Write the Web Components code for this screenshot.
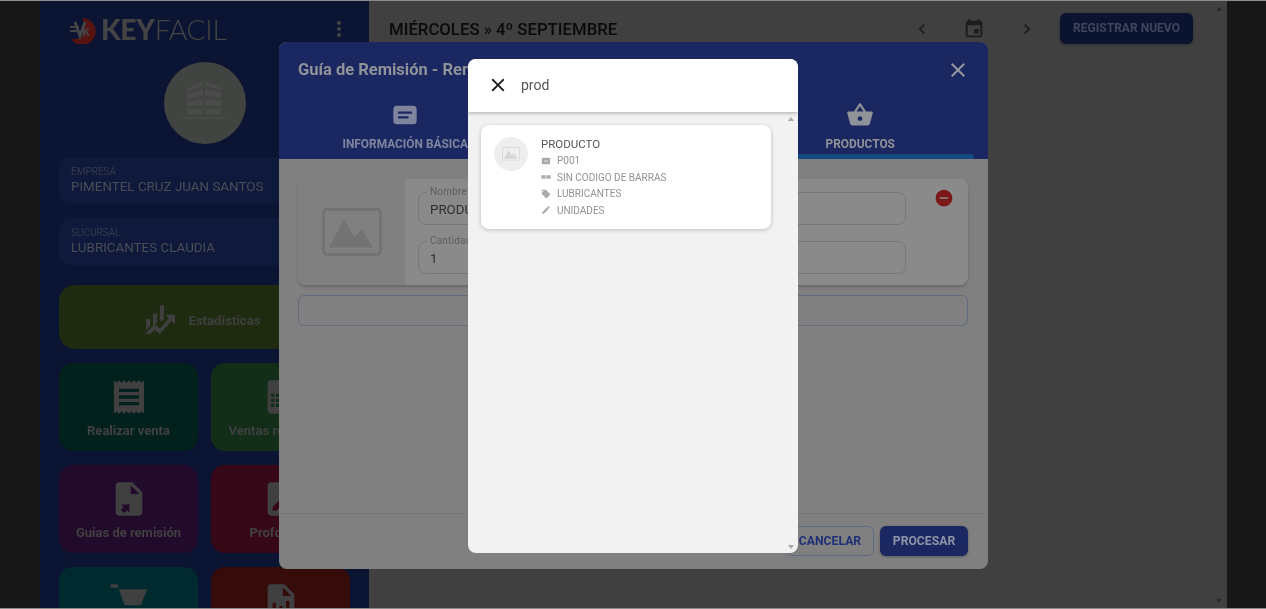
<!DOCTYPE html>
<html lang="es"><head><meta charset="utf-8"><title>KeyFacil</title>
<style>
html,body{margin:0;padding:0;height:100%;overflow:hidden;background:#8c8c8c}
body{font-family:Roboto,"Liberation Sans",sans-serif}
</style></head>
<body>
<kf-app></kf-app>
<script>
const P={
 close:'M19 6.41L17.59 5 12 10.59 6.41 5 5 6.41 10.59 12 5 17.59 6.41 19 12 13.41 17.59 19 19 17.59 13.41 12z',
 left:'M15.41 7.41L14 6l-6 6 6 6 1.41-1.41L10.83 12z',
 right:'M10 6L8.59 7.41 13.17 12l-4.58 4.59L10 18l6-6z',
 event:'M17 12h-5v5h5v-5zM16 1v2H8V1H6v2H5c-1.11 0-1.99.9-1.99 2L3 19c0 1.1.89 2 2 2h14c1.1 0 2-.9 2-2V5c0-1.1-.9-2-2-2h-1V1h-2zm3 18H5V8h14v11z',
 more:'M12 8c1.1 0 2-.9 2-2s-.9-2-2-2-2 .9-2 2 .9 2 2 2zm0 2c-1.1 0-2 .9-2 2s.9 2 2 2 2-.9 2-2-.9-2-2-2zm0 6c-1.1 0-2 .9-2 2s.9 2 2 2 2-.9 2-2-.9-2-2-2z',
 receipt:'M18 17H6v-2h12v2zm0-4H6v-2h12v2zm0-4H6V7h12v2zM3 22l1.5-1.5L6 22l1.5-1.5L9 22l1.5-1.5L12 22l1.5-1.5L15 22l1.5-1.5L18 22l1.5-1.5L21 22V2l-1.5 1.5L18 2l-1.5 1.5L15 2l-1.5 1.5L12 2l-1.5 1.5L9 2 7.5 3.5 6 2 4.5 3.5 3 2v20z',
 list:'M14 2H6c-1.1 0-2 .9-2 2v16c0 1.1.9 2 2 2h12c1.1 0 2-.9 2-2V8l-6-6zM6 10h2v2H6zM6 13h2v2H6zM6 16h2v2H6zM9 10h9v2H9zM9 13h9v2H9zM9 16h9v2H9z',
 fileout:'M14 2H6c-1.1 0-2 .9-2 2v16c0 1.1.9 2 2 2h12c1.1 0 2-.9 2-2V8l-6-6zM13 9V3.7L18.3 9H13zM8.2 19.6l-1.1-1.1 1.7-1.7-1.4-1.4 4.9-.2-.2 4.9-1.4-1.4-1.7 1.7-.7-.8z',
 filepen:'M14 2H6c-1.1 0-2 .9-2 2v16c0 1.1.9 2 2 2h12c1.1 0 2-.9 2-2V8l-6-6zM13 9V3.7L18.3 9H13zM7 19v-2.2l5-5 2.2 2.2-5 5H7z',
 filechart:'M14 2H6c-1.1 0-2 .9-2 2v16c0 1.1.9 2 2 2h12c1.1 0 2-.9 2-2V8l-6-6zM13 9V3.7L18.3 9H13zM9 19H7v-6h2v6zm4 0h-2v-4h2v4zm4 0h-2v-7h2v7z',
 cart:'M1 2h4.200l1 3H23l-4 9.500H9.200L5.700 4H1V2zM8 16.500h13v2H8zM8.500 20.500a2 2 0 1 0 .01 0zM18.500 20.500a2 2 0 1 0 .01 0z',
 subject:'M5 4h14a3 3 0 0 1 3 3v10a3 3 0 0 1-3 3H5a3 3 0 0 1-3-3V7a3 3 0 0 1 3-3zM6 9v2h12V9H6zm0 4v2h9v-2H6z',
 basket:'M17.21 9l-4.38-6.56c-.19-.28-.51-.42-.83-.42-.32 0-.64.14-.83.43L6.79 9H2c-.55 0-1 .45-1 1 0 .09.01.18.04.27l2.54 9.27c.23.84 1 1.46 1.92 1.46h13c.92 0 1.69-.62 1.93-1.46l2.54-9.27L23 10c0-.55-.45-1-1-1h-4.79zM9 9l3-4.4L15 9H9zm3 8c-1.1 0-2-.9-2-2s.9-2 2-2 2 .9 2 2-.9 2-2 2z',
 minus:'M12 2C6.48 2 2 6.48 2 12s4.48 10 10 10 10-4.48 10-10S17.52 2 12 2zm5 11H7v-2h10v2z',
 code:'M4 4h16a2 2 0 0 1 2 2v12a2 2 0 0 1-2 2H4a2 2 0 0 1-2-2V6a2 2 0 0 1 2-2zM10 9.500l-2.500 2.500 2.500 2.500 1-1-1.500-1.500 1.500-1.500-1-1zm4 0l-1 1 1.500 1.500-1.500 1.500 1 1 2.500-2.500-2.500-2.500z',
 barcode:'M1 8h10v8H1zM13 8h10v8H13z',
 tag:'M21.41 11.58l-9-9C12.05 2.22 11.55 2 11 2H4c-1.1 0-2 .9-2 2v7c0 .55.22 1.05.59 1.42l9 9c.36.36.86.58 1.41.58.55 0 1.05-.22 1.41-.59l7-7c.37-.36.59-.86.59-1.41 0-.55-.23-1.06-.59-1.42zM5.500 7C4.670 7 4 6.330 4 5.500S4.670 4 5.500 4 7 4.670 7 5.500 6.330 7 5.500 7z',
 pencil:'M3 17.25V21h3.75L17.81 9.94l-3.75-3.75L3 17.25zM20.71 7.04c.39-.39.39-1.02 0-1.41l-2.34-2.34c-.39-.39-1.02-.39-1.41 0l-1.83 1.83 3.75 3.75 1.83-1.83z',
 chart:'M3 13h3v5l-3 3v-8zM8 9h3v7l-3 2V9zM13 3h3v10l-3 2V3zM2 24l7-7 4 3 6.500-7.500L17 10h7v7l-2.500-2.500L13 24l-4-3-4 4-3-1z',
 building:'M11 2L3 6v1.200L11 4zM12 2l8 3.500v1.200L12 4zM3 8.500L11 6v3.500L3 11zM12 6l8 2v2.500L12 9.500zM3 12.200L11 11v3.500H3zM12 11l8 .800v2.700H12zM3 16h8v2.500H3zM12 16h8v2.500h-8zM1 20h22v.8H1z'
};
function def(name,html,init){
 customElements.define(name,class extends HTMLElement{
  connectedCallback(){
   if(this.shadowRoot)return;
   const r=this.attachShadow({mode:'open'});
   r.innerHTML=typeof html==='function'?html(this):html;
   if(init)init(this,r);
  }
 });
}
def('kf-icon',h=>{const s=h.getAttribute('size')||24;return `<style>:host{display:inline-flex;width:${s}px;height:${s}px;flex:none;color:inherit}svg{display:block;width:100%;height:100%;fill:currentColor}</style><svg viewBox="0 0 24 24" aria-hidden="true"><path fill-rule="evenodd" d="${P[h.getAttribute('name')]}"/></svg>`});

def('kf-picture',h=>{const w=h.getAttribute('width')||60;return `<style>:host{display:inline-flex;flex:none;width:${w}px;height:${w*.8}px;color:inherit}svg{width:100%;height:100%}</style><svg viewBox="0 0 60 48" aria-hidden="true"><rect x="1.500" y="1.500" width="57" height="45" rx="3.500" fill="none" stroke="currentColor" stroke-width="3"/><path d="M8 39L22 12 32 30 40 22 50 39z" fill="currentColor" stroke="currentColor" stroke-width="1" stroke-linejoin="round"/></svg>`});

def('kf-logo',`<style>:host{display:flex;align-items:center;height:30px;color:#444;font-family:Lato,sans-serif;font-size:28.300px;line-height:30px;letter-spacing:-.3px}
svg{width:30px;height:30px;flex:none;margin-right:2px}b{font-weight:900}span{font-weight:300}text{font-family:"Liberation Sans",sans-serif;font-weight:700;font-size:14px;fill:#444}</style>
<svg viewBox="0 0 30 30"><path d="M13 4a13.500 13.500 0 1 1-11 21c6 1 12-2 13-8C16 11 15 7 13 4z" fill="#561310"/><path d="M6 8l5 14 5-14" fill="none" stroke="#444" stroke-width="3"/><path d="M1 13h9M1 17h9" stroke="#444" stroke-width="2"/><text x="13" y="22">k</text></svg><b>KEY</b><span>FACIL</span>`);

def('kf-info',`<style>:host{display:flex;flex-direction:column;justify-content:center;height:47px;padding-left:12px;border-radius:12px;background:#0f193b;box-sizing:border-box}
.l{font-size:10px;line-height:12px;color:#343a4c}.v{font-size:13.400px;line-height:18px;color:#4a4d55;white-space:nowrap}</style>
<div class="l"><slot name="label"></slot></div><div class="v"><slot></slot></div>`);

def('kf-tile',h=>`<style>:host{display:flex;flex-direction:column;align-items:center;justify-content:flex-start;height:88px;border-radius:14px;background:${h.getAttribute('bg')};color:#404040;font-weight:700;font-size:13px;line-height:16px;box-sizing:border-box;padding-top:14px;overflow:hidden;white-space:nowrap}
.i{height:40px;margin-bottom:6px}</style><div class="i"><kf-icon name="${h.getAttribute('icon')}" size="40"></kf-icon></div><slot></slot>`);

def('kf-sidebar',`<style>:host{display:block;width:329px;flex:none;background:#0b1433;padding:0 19px;box-sizing:border-box;overflow:hidden;height:100%}
.top{display:flex;align-items:center;justify-content:space-between;height:30px;margin-top:13px;padding:0 0 0 10px;margin-right:-1px;color:#444}
.av{width:82px;height:82px;border-radius:50%;background:#424442;margin:18px auto 13px;display:flex;align-items:center;justify-content:center;color:#4a4c4a;box-sizing:border-box;padding-bottom:5px}
kf-info{margin-bottom:14px}kf-info+kf-info{margin-bottom:20px}
.stat{display:flex;align-items:center;justify-content:center;gap:13px;height:64px;border-radius:16px;background:#1f2b10;color:#3f3f3f;font-weight:700;font-size:13.200px;margin-bottom:14px;box-sizing:border-box;padding:0 6px 0 0}
.stat span{position:relative;top:3px}
.grid{display:grid;grid-template-columns:139px 139px;gap:14px 13px}</style>
<div class="top"><kf-logo></kf-logo><kf-icon name="more" size="24"></kf-icon></div>
<div class="av"><kf-icon name="building" size="48"></kf-icon></div>
<kf-info><span slot="label">EMPRESA</span>PIMENTEL CRUZ JUAN SANTOS</kf-info>
<kf-info><span slot="label">SUCURSAL</span>LUBRICANTES CLAUDIA</kf-info>
<div class="stat"><kf-icon name="chart" size="33"></kf-icon><span>Estadísticas</span></div>
<div class="grid">
<kf-tile bg="#02211d" icon="receipt">Realizar venta</kf-tile>
<kf-tile bg="#122e18" icon="list">Ventas realizadas</kf-tile>
<kf-tile bg="#220a2a" icon="fileout">Guias de remisión</kf-tile>
<kf-tile bg="#360716" icon="filepen">Proformas</kf-tile>
<kf-tile bg="#012a2f" icon="cart"></kf-tile>
<kf-tile bg="#360c0a" icon="filechart"></kf-tile>
</div>`);

def('kf-topbar',`<style>:host{display:flex;align-items:center;height:56px;padding:0 34px 0 20px;box-sizing:border-box;color:#0a0a0a}
h1{flex:1;margin:0;font-weight:500;font-size:16.750px;line-height:56px;white-space:nowrap}
.n{width:52.500px;display:flex;justify-content:center;color:#1c1c1c}
button{all:unset;box-sizing:border-box;margin:-2px 0 0 7px;width:133px;height:31px;border-radius:6px;background:#0a1330;color:#3e465e;font:700 12.050px/31px Roboto,sans-serif;text-align:center;box-shadow:0 1px 3px rgba(0,0,0,.3);white-space:nowrap}</style>
<h1>MIÉRCOLES » 4º SEPTIEMBRE</h1>
<span class="n"><kf-icon name="left" size="20"></kf-icon></span><span class="n"><kf-icon name="event" size="22"></kf-icon></span><span class="n"><kf-icon name="right" size="20"></kf-icon></span>
<button>REGISTRAR NUEVO</button>`);

def('kf-arrow',h=>`<style>:host{position:absolute;width:0;height:0;border-left:3.500px solid transparent;border-right:3.500px solid transparent;${h.getAttribute('dir')==='up'?'border-bottom':'border-top'}:4px solid ${h.getAttribute('color')||'#2a2a2a'};left:${h.getAttribute('x')}px;${h.hasAttribute('top')?'top:'+h.getAttribute('top')+'px':'bottom:'+h.getAttribute('bottom')+'px'}}</style>`);

def('kf-field',`<style>:host{display:block;position:relative;height:33px;border:1px solid #787878;border-radius:8px;box-sizing:border-box;color:#2e2e2e;font-size:13.300px;line-height:31px;padding:1px 11px 0}
.l{position:absolute;top:-7px;left:8px;padding:0 3px;background:#8a8a8a;color:#5e5e5e;font-size:10px;line-height:12px;letter-spacing:.2px}</style><span class="l"><slot name="label"></slot></span><slot></slot>`);

def('kf-tab',h=>`<style>:host{display:flex;flex-direction:column;align-items:center;flex:1;color:${h.hasAttribute('active')?'#909299':'#7f859f'};font-weight:700;font-size:11.900px;line-height:14px;white-space:nowrap;position:relative}
kf-icon{margin:0 0 8px}</style><kf-icon name="${h.getAttribute('icon')||'subject'}" size="28"></kf-icon><slot></slot>`);

def('kf-modal',`<style>:host{position:absolute;left:279px;top:41px;width:709px;height:527px;border-radius:8px;overflow:hidden;background:#808080;display:flex;flex-direction:column}
header{height:117px;background:#1a2760;position:relative;box-sizing:border-box;flex:none}
.title{display:flex;align-items:center;justify-content:space-between;padding:16px 19px 0;color:#909299;font-size:16.500px;font-weight:700;line-height:22px}
.title kf-icon{color:#96989e;margin-right:-1px}
.tabs{display:flex;position:absolute;left:12.500px;width:682.500px;top:59px}
.bar{position:absolute;left:467px;width:228px;bottom:0;height:5px;background:#134a80;border-radius:3px 3px 0 0}
main{flex:1;padding:20px 20px 0 19px;background:#808080}
.card{display:flex;height:106px;border-radius:8px;background:#8a8a8a;box-shadow:0 2px 3px rgba(0,0,0,.2);overflow:hidden}
.pic{width:107px;background:#808080;display:flex;align-items:center;justify-content:center;color:#737373;padding-left:1px;box-sizing:border-box}
.fields{flex:1;display:flex;flex-direction:column;gap:16px;padding:13px 0 0 13px}
.rem{width:62px;display:flex;justify-content:center;padding:9px 0 0 14px;box-sizing:border-box;color:#7c1818}
.obs{height:31px;margin-top:10px;border:1px solid #606c7c;border-radius:6px;box-sizing:border-box}
footer{height:56px;border-top:1px solid #767676;display:flex;justify-content:flex-end;align-items:center;gap:6px;padding:0 20px 2px;flex:none;box-sizing:border-box}
button{all:unset;box-sizing:border-box;width:88px;height:30px;border-radius:6px;text-align:center;font:700 12.200px/28px Roboto,sans-serif}
.c{border:1px solid #5e6888;color:#1f2f78}.p{background:#1a2760;color:#8f94a9;line-height:30px;box-shadow:0 1px 3px rgba(0,0,0,.3)}</style>
<header><div class="title"><span>Guía de Remisión - Remitente</span><kf-icon name="close" size="24"></kf-icon></div>
<div class="tabs"><kf-tab icon="subject">INFORMACIÓN BÁSICA</kf-tab><kf-tab icon="subject"></kf-tab><kf-tab icon="basket" active>PRODUCTOS</kf-tab></div><div class="bar"></div></header>
<main><div class="card"><div class="pic"><kf-picture width="60"></kf-picture></div>
<div class="fields"><kf-field><span slot="label">Nombre</span>PRODUCTO</kf-field><kf-field><span slot="label">Cantidad</span>1</kf-field></div>
<div class="rem"><kf-icon name="minus" size="20"></kf-icon></div></div><div class="obs"></div></main>
<footer><button class="c">CANCELAR</button><button class="p">PROCESAR</button></footer>`);

def('kf-result',`<style>:host{display:flex;width:290px;height:104px;background:#fff;border-radius:8px;box-shadow:0 1px 4px rgba(0,0,0,.22);box-sizing:border-box;padding:12px 13px}
.av{width:34px;height:34px;border-radius:50%;background:#eee;display:flex;align-items:center;justify-content:center;color:#d6d6d6;margin-right:13px;flex:none}
.n{font-size:11.500px;line-height:14px;color:#565656;margin-bottom:1.500px}
.r{display:flex;align-items:center;height:16.500px;font-size:10px;color:#929292;white-space:nowrap}
.r kf-icon{margin-right:6px;color:#aaa}</style>
<div class="av"><kf-picture width="18"></kf-picture></div>
<div><div class="n">PRODUCTO</div>
<div class="r"><kf-icon name="code" size="10"></kf-icon>P001</div>
<div class="r"><kf-icon name="barcode" size="10"></kf-icon>SIN CODIGO DE BARRAS</div>
<div class="r"><kf-icon name="tag" size="10"></kf-icon>LUBRICANTES</div>
<div class="r"><kf-icon name="pencil" size="10"></kf-icon>UNIDADES</div></div>`);

def('kf-dialog',`<style>:host{position:absolute;left:468px;top:58px;width:330px;height:494px;border-radius:8px;overflow:hidden;background:#f2f2f2;display:flex;flex-direction:column}
header{height:53px;background:#fff;display:flex;align-items:center;box-sizing:border-box;padding:0 0 2px 19px;box-shadow:0 1px 4px rgba(0,0,0,.3);color:#1c1c1c;flex:none;position:relative}
input{all:unset;margin-left:12px;font:14px Roboto,sans-serif;color:#555;width:200px}
section{padding:13px;flex:1;position:relative}</style>
<header><kf-icon name="close" size="22"></kf-icon><input value="prod" aria-label="Buscar"></header>
<section><kf-result></kf-result></section>
<kf-arrow dir="up" x="320" top="58" color="#a8a8a8"></kf-arrow><kf-arrow dir="down" x="320" bottom="4" color="#a8a8a8"></kf-arrow>`);

def('kf-app',`<style>:host{display:block;position:relative;width:1266px;height:609px;box-sizing:border-box;padding:1px 0;overflow:hidden;filter:blur(.45px)}
.frame{position:relative;display:flex;height:607px;background:#171717;overflow:hidden}
.main{width:858px;flex:none;background:#404040;height:100%}
.gutter{flex:1}.spacer{width:40px;flex:none}</style>
<div class="frame"><div class="spacer"></div><kf-sidebar></kf-sidebar><div class="main"><kf-topbar></kf-topbar></div><div class="gutter"></div>
<kf-arrow dir="up" x="1216" top="6" color="#2a2a2a"></kf-arrow><kf-arrow dir="down" x="1216" bottom="5" color="#2a2a2a"></kf-arrow>
<kf-modal></kf-modal><kf-dialog></kf-dialog></div>`);
</script>
</body></html>
